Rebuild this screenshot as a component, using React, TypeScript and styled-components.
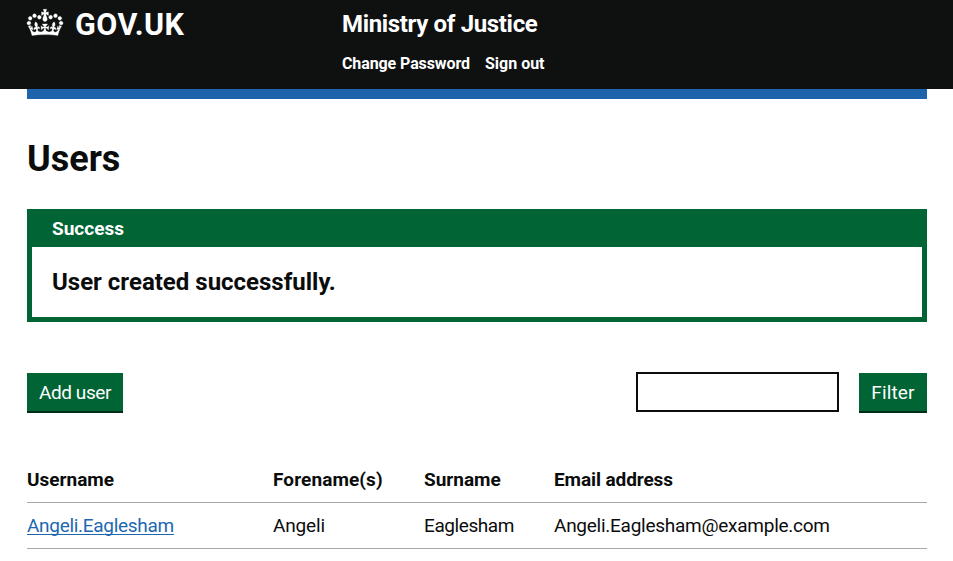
import React from 'react';
import styled, { createGlobalStyle } from 'styled-components';

const INK = '#0b0c0c';
const GREEN = '#006435';
const BLUE = '#1c67b0';

const GlobalStyle = createGlobalStyle`
  *, *::before, *::after { box-sizing: border-box; }
  body {
    margin: 0;
    background: #fff;
    color: ${INK};
    font-family: Roboto, "Liberation Sans", sans-serif;
    font-size: 19px;
    line-height: 25px;
    -webkit-font-smoothing: antialiased;
  }
`;

const Header = styled.header`
  height: 89px;
  padding: 0 26px 0 27px;
  background: #0f1110;
  color: #fff;
  display: grid;
  grid-template-columns: 315px 1fr;
`;

const Logo = styled.a`
  display: flex;
  align-items: flex-start;
  height: 48px;
  padding-top: 9px;
  color: #fff;
  text-decoration: none;
`;

const Crown = styled.svg`
  display: block;
  width: 36px;
  height: 27px;
  margin-right: 12px;
  overflow: visible;
`;

const LogoText = styled.span`
  margin-top: 1px;
  font-size: 30.5px;
  font-weight: 700;
  line-height: 30px;
  letter-spacing: 0.5px;
`;

const HeaderContent = styled.div`
  padding-top: 9px;
`;

const ServiceName = styled.div`
  font-size: 24px;
  font-weight: 700;
  line-height: 30px;
`;

const Navigation = styled.nav`
  display: flex;
  gap: 15px;
  margin-top: 15px;
`;

const NavLink = styled.a`
  color: #fff;
  font-size: 16px;
  font-weight: 700;
  line-height: 20px;
  text-decoration: none;
`;

const Container = styled.main`
  margin: 0 26px 0 27px;
  border-top: 10px solid #1d64ad;
`;

const Title = styled.h1`
  margin: 0;
  padding-top: 40px;
  font-size: 36px;
  font-weight: 700;
  line-height: 40px;
`;

const Banner = styled.section`
  margin-top: 30px;
  border: 5px solid ${GREEN};
  background: ${GREEN};
`;

const BannerTitle = styled.h2`
  margin: 0;
  height: 33px;
  padding: 2px 20px 0;
  color: #fff;
  font-size: 19px;
  font-weight: 700;
  line-height: 25px;
`;

const BannerBody = styled.p`
  margin: 0;
  height: 70px;
  padding: 20px;
  background: #fff;
  font-size: 24px;
  font-weight: 700;
  line-height: 30px;
`;

const Toolbar = styled.div`
  display: flex;
  align-items: flex-start;
  margin-top: 50px;
`;

const Button = styled.button<{ $width: number; $tracking: number }>`
  width: ${(p) => p.$width}px;
  height: 40px;
  margin: 1px 0 0;
  padding: 1px 0 0;
  border: 0;
  border-bottom: 2px solid #002d18;
  background: ${GREEN};
  color: #fff;
  font: 400 19px/19px Roboto, sans-serif;
  letter-spacing: ${(p) => p.$tracking}px;
`;

const FilterForm = styled.form`
  display: flex;
  gap: 20px;
  margin-left: auto;
`;

const FilterInput = styled.input`
  width: 203px;
  height: 40px;
  padding: 5px;
  border: 2px solid ${INK};
  border-radius: 0;
  background: #fff;
  font: inherit;
  outline: 0;
`;

const Table = styled.table`
  width: 100%;
  margin-top: 44px;
  border-collapse: collapse;
  table-layout: fixed;
`;

const Column = styled.col<{ $width?: number }>`
  ${(p) => (p.$width ? `width: ${p.$width}px;` : '')}
`;

const HeadCell = styled.th`
  height: 45px;
  padding: 10px 0 9px;
  border-bottom: 1px solid #a6a8a9;
  font-weight: 700;
  text-align: left;
  white-space: nowrap;
`;

const Cell = styled.td`
  height: 46px;
  padding: 10px 0;
  border-bottom: 1px solid #a6a8a9;
  white-space: nowrap;
`;

const UserLink = styled.a`
  color: ${BLUE};
  text-decoration: underline;
  text-decoration-thickness: 1px;
  text-underline-offset: 2px;
  text-decoration-skip-ink: none;
`;

const Tracked = styled.span<{ $by: number }>`
  letter-spacing: ${(p) => p.$by}px;
`;

const CROWN_PATH =
  'M25 30.2c3.5 1.5 7.7-.2 9.1-3.7 1.5-3.6-.2-7.8-3.9-9.2-3.6-1.4-7.6.3-9.1 3.9-1.4 3.5.3 7.5 3.9 9zM9 39.5c3.6 1.5 7.8-.2 9.2-3.7 1.5-3.6-.2-7.8-3.9-9.1-3.6-1.5-7.6.2-9.1 3.8-1.4 3.5.3 7.5 3.8 9zM4.4 57.2c3.5 1.5 7.7-.2 9.1-3.8 1.5-3.6-.2-7.7-3.9-9.1-3.5-1.5-7.6.3-9.1 3.8-1.4 3.5.3 7.6 3.9 9.1zm38.3-21.4c3.5 1.5 7.7-.2 9.1-3.8 1.5-3.6-.2-7.7-3.9-9.1-3.6-1.5-7.6.3-9.1 3.8-1.3 3.6.4 7.7 3.9 9.1zm64.4-5.6c-3.6 1.5-7.8-.2-9.1-3.7-1.5-3.6.2-7.8 3.8-9.2 3.6-1.4 7.7.3 9.2 3.9 1.3 3.5-.4 7.5-3.9 9zm15.9 9.3c-3.6 1.5-7.7-.2-9.1-3.7-1.5-3.6.2-7.8 3.7-9.1 3.6-1.5 7.7.2 9.2 3.8 1.5 3.5-.3 7.5-3.8 9zm4.7 17.7c-3.6 1.5-7.8-.2-9.2-3.8-1.5-3.6.2-7.7 3.9-9.1 3.6-1.5 7.7.3 9.2 3.8 1.3 3.5-.4 7.6-3.9 9.1zM89.3 35.8c-3.6 1.5-7.8-.2-9.2-3.8-1.4-3.6.2-7.7 3.9-9.1 3.6-1.5 7.7.3 9.2 3.8 1.4 3.6-.3 7.7-3.9 9.1zM69.7 17.7l8.9 4.7V9.3l-8.9 2.8c-.2-.3-.5-.6-.9-.9L72.4 0H59.6l3.5 11.2c-.3.3-.6.5-.9.9l-8.8-2.8v13.1l8.8-4.7c.3.3.6.7.9.9l-5 15.4v.1c-.2.8-.4 1.6-.4 2.4 0 4.1 3.1 7.5 7 8.1h.2c.3 0 .7.1 1 .1.4 0 .7 0 1-.1h.2c4-.6 7.1-4.1 7.1-8.1 0-.8-.1-1.7-.4-2.4V34l-5.1-15.4c.4-.2.7-.6 1-.9zM66 92.8c16.9 0 32.8 1.1 47.1 3.2 4-16.9 8.9-26.7 14-33.5l-9.6-3.4c1 4.9 1.1 7.2 0 10.2-1.5-1.4-3-4.3-4.2-8.7L108.6 76c2.8-2 5-3.2 7.5-3.3-4.4 9.4-10 11.9-13.6 11.2-4.3-.8-6.3-4.6-5.6-7.9 1-4.7 5.7-5.9 8-.5 4.3-8.7-3-11.4-7.6-8.8 7.1-7.2 7.9-13.5 2.1-21.1-8 6.1-8.1 12.3-4.5 20.8-4.7-5.4-12.1-2.5-9.5 6.2 3.4-5.2 7.9-2 7.2 3.1-.6 4.3-6.4 7.8-13.5 7.2-10.3-.9-10.9-8-11.2-13.8 2.5-.5 7.1 1.8 11 7.3L80.2 60c-4.1 4.4-8 5.3-12.3 5.4 1.4-4.4 8-11.6 8-11.6H55.5s6.4 7.2 7.9 11.6c-4.2-.1-8-1-12.3-5.4l1.4 16.4c3.9-5.5 8.5-7.7 10.9-7.3-.3 5.8-.9 12.8-11.1 13.8-7.2.6-12.9-2.9-13.5-7.2-.7-5 3.8-8.3 7.1-3.1 2.7-8.7-4.6-11.6-9.4-6.2 3.7-8.5 3.6-14.7-4.6-20.8-5.8 7.6-5 13.9 2.2 21.1-4.7-2.6-11.9.1-7.7 8.8 2.3-5.5 7.1-4.2 8.1.5.7 3.3-1.3 7.1-5.7 7.9-3.5.7-9-1.8-13.5-11.2 2.5.1 4.7 1.3 7.5 3.3l-4.7-15.4c-1.2 4.4-2.7 7.2-4.3 8.7-1.1-3-.9-5.3 0-10.2l-9.5 3.4c5 6.9 9.9 16.7 14 33.5 14.8-2.1 30.8-3.2 47.7-3.2z';

export default function App() {
  return (
    <>
      <GlobalStyle />
      <Header>
        <Logo href="#">
          <Crown viewBox="0 0 132 97" aria-hidden="true">
            <path fill="currentColor" stroke="currentColor" strokeWidth="1" fillRule="evenodd" d={CROWN_PATH} />
          </Crown>
          <LogoText>GOV.UK</LogoText>
        </Logo>
        <HeaderContent>
          <ServiceName><Tracked $by={-0.34}>Ministry of Justice</Tracked></ServiceName>
          <Navigation>
            <NavLink href="#"><Tracked $by={-0.1}>Change Password</Tracked></NavLink>
            <NavLink href="#"><Tracked $by={0}>Sign out</Tracked></NavLink>
          </Navigation>
        </HeaderContent>
      </Header>
      <Container>
        <Title>Users</Title>
        <Banner>
          <BannerTitle>Success</BannerTitle>
          <BannerBody>User created successfully.</BannerBody>
        </Banner>
        <Toolbar>
          <Button type="button" $width={96} $tracking={-0.4}>Add user</Button>
          <FilterForm>
            <FilterInput aria-label="Filter users" />
            <Button type="button" $width={68} $tracking={0.15}>Filter</Button>
          </FilterForm>
        </Toolbar>
        <Table>
          <colgroup>
            <Column $width={246} />
            <Column $width={151} />
            <Column $width={130} />
            <Column />
          </colgroup>
          <thead>
            <tr>
              <HeadCell>Username</HeadCell>
              <HeadCell><Tracked $by={0.1}>Forename(s)</Tracked></HeadCell>
              <HeadCell>Surname</HeadCell>
              <HeadCell><Tracked $by={-0.1}>Email address</Tracked></HeadCell>
            </tr>
          </thead>
          <tbody>
            <tr>
              <Cell><UserLink href="#"><Tracked $by={-0.3}>Angeli.Eaglesham</Tracked></UserLink></Cell>
              <Cell><Tracked $by={-0.17}>Angeli</Tracked></Cell>
              <Cell><Tracked $by={-0.42}>Eaglesham</Tracked></Cell>
              <Cell><Tracked $by={-0.26}>Angeli.Eaglesham@example.com</Tracked></Cell>
            </tr>
          </tbody>
        </Table>
      </Container>
    </>
  );
}
